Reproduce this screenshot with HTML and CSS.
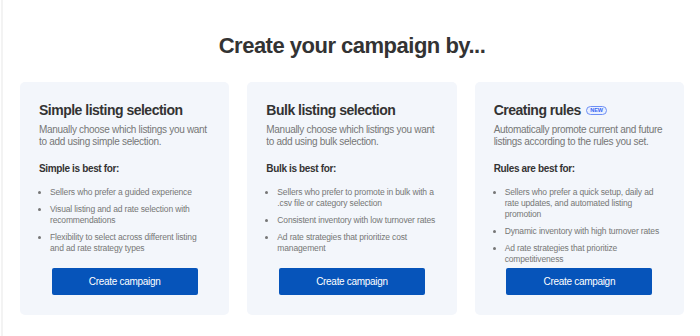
FILE: index.html
```html
<!DOCTYPE html>
<html lang="en">
<head>
  <meta charset="UTF-8">
  <title>Create your campaign</title>
  <link rel="stylesheet" href="styles.css">
</head>
<body>
  <div class="page">
    <h1 class="title">Create your campaign by...</h1>

    <div class="cards">
      <div class="card">
        <h2>Simple listing selection</h2>
        <p class="desc">Manually choose which listings you want to add using simple selection.</p>
        <h3>Simple is best for:</h3>
        <ul>
          <li>Sellers who prefer a guided experience</li>
          <li>Visual listing and ad rate selection with recommendations</li>
          <li>Flexibility to select across different listing and ad rate strategy types</li>
        </ul>
        <button class="btn">Create campaign</button>
      </div>

      <div class="card">
        <h2>Bulk listing selection</h2>
        <p class="desc">Manually choose which listings you want to add using bulk selection.</p>
        <h3>Bulk is best for:</h3>
        <ul>
          <li>Sellers who prefer to promote in bulk with a .csv file or category selection</li>
          <li>Consistent inventory with low turnover rates</li>
          <li>Ad rate strategies that prioritize cost management</li>
        </ul>
        <button class="btn">Create campaign</button>
      </div>

      <div class="card">
        <h2>Creating rules <span class="badge">NEW</span></h2>
        <p class="desc">Automatically promote current and future listings according to the rules you set.</p>
        <h3>Rules are best for:</h3>
        <ul>
          <li>Sellers who prefer a quick setup, daily ad rate updates, and automated listing promotion</li>
          <li>Dynamic inventory with high turnover rates</li>
          <li>Ad rate strategies that prioritize competitiveness</li>
        </ul>
        <button class="btn">Create campaign</button>
      </div>
    </div>
  </div>
</body>
</html>
```

FILE: styles.css
```css
html, body {
  margin: 0;
  padding: 0;
  background-color: white;
  color: #333;
  font-family: "Liberation Sans", Arial, sans-serif;
}
.page {
  border-left: 2px solid #f3f3f3;
  margin-left: 1px;
  padding: 0 16px 0 17px;
  height: 336px;
  box-sizing: border-box;
}
.title {
  margin: 0;
  padding-top: 33px;
  font-size: 22px;
  line-height: 26px;
  letter-spacing: -0.5px;
  text-align: center;
  color: #333;
}
.cards {
  display: flex;
  gap: 18px;
  margin-top: 23px;
}
.card {
  flex: 1;
  display: flex;
  flex-direction: column;
  background-color: #f3f6fb;
  border-radius: 5px;
  padding: 19px 19px 20px;
  height: 233px;
  box-sizing: border-box;
}
.card h2 {
  margin: 0;
  font-size: 14px;
  line-height: 18px;
  letter-spacing: -0.5px;
  color: #333;
}
.badge {
  display: inline-block;
  vertical-align: middle;
  margin-left: 2px;
  font-size: 5.5px;
  line-height: 7px;
  letter-spacing: 0;
  padding: 0 3px;
  border: 1px solid #6d8ff5;
  border-radius: 5px;
  background-color: #eaf0fe;
  color: #3665f3;
  position: relative;
  top: -1px;
}
.desc {
  margin: 5px 0 0;
  font-size: 10px;
  line-height: 12px;
  letter-spacing: -0.3px;
  color: #767676;
}
.card h3 {
  margin: 14px 0 0;
  font-size: 10px;
  line-height: 13px;
  letter-spacing: -0.35px;
  color: #333;
}
ul {
  margin: 12px 0 0;
  padding-left: 11px;
  font-size: 8.5px;
  line-height: 11px;
  letter-spacing: -0.15px;
  color: #767676;
}
li {
  margin-bottom: 6px;
}
li:last-child {
  margin-bottom: 0;
}
.btn {
  margin: auto auto 0;
  width: 146px;
  height: 27px;
  border: none;
  border-radius: 2px;
  background-color: #0654ba;
  color: white;
  font-family: inherit;
  font-size: 10px;
  letter-spacing: -0.3px;
  cursor: pointer;
}
```
